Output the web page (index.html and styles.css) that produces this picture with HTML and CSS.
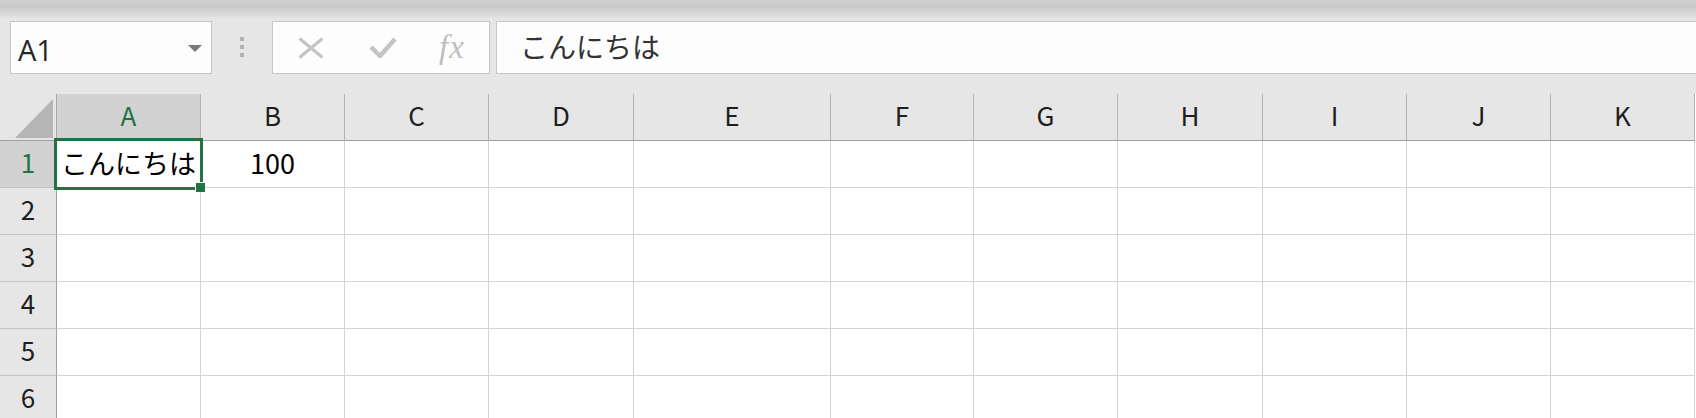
FILE: index.html
```html
<!DOCTYPE html>
<html lang="ja">
<head>
<meta charset="utf-8">
<title>Book1</title>
<link rel="stylesheet" href="styles.css">
</head>
<body>
<div class="toolbar">
  <div class="namebox">
    <span class="namebox-text">A1</span>
    <svg class="namebox-arrow" width="14" height="7" viewBox="0 0 14 7"><polygon points="0,0 14,0 7,7" fill="#7a7a7a"/></svg>
  </div>
  <div class="grip"><i></i><i></i><i></i></div>
  <div class="fx-tools">
    <svg class="tool-cancel" width="26" height="22" viewBox="0 0 26 22"><path d="M1.5 1.5 L24.5 20.5 M1.5 20.5 L24.5 1.5" stroke="#c4c4c4" stroke-width="3" fill="none"/></svg>
    <svg class="tool-enter" width="28" height="24" viewBox="0 0 28 24"><path d="M2 11 L11 20 L26 3" stroke="#c4c4c4" stroke-width="4.5" fill="none" stroke-linejoin="round"/></svg>
    <span class="tool-fx">fx</span>
  </div>
  <div class="formula">こんにちは</div>
</div>

<div class="sheet">
  <div class="corner"><span class="corner-tri"></span></div>
  <div class="colhead active">A</div>
  <div class="colhead">B</div>
  <div class="colhead">C</div>
  <div class="colhead">D</div>
  <div class="colhead">E</div>
  <div class="colhead">F</div>
  <div class="colhead">G</div>
  <div class="colhead">H</div>
  <div class="colhead">I</div>
  <div class="colhead">J</div>
  <div class="colhead">K</div>

  <div class="rowhead active">1</div>
  <div class="cell text">こんにちは</div>
  <div class="cell num">100</div>
  <div class="cell"></div><div class="cell"></div><div class="cell"></div><div class="cell"></div>
  <div class="cell"></div><div class="cell"></div><div class="cell"></div><div class="cell"></div><div class="cell"></div>

  <div class="rowhead">2</div>
  <div class="cell"></div><div class="cell"></div><div class="cell"></div><div class="cell"></div><div class="cell"></div><div class="cell"></div>
  <div class="cell"></div><div class="cell"></div><div class="cell"></div><div class="cell"></div><div class="cell"></div>

  <div class="rowhead">3</div>
  <div class="cell"></div><div class="cell"></div><div class="cell"></div><div class="cell"></div><div class="cell"></div><div class="cell"></div>
  <div class="cell"></div><div class="cell"></div><div class="cell"></div><div class="cell"></div><div class="cell"></div>

  <div class="rowhead">4</div>
  <div class="cell"></div><div class="cell"></div><div class="cell"></div><div class="cell"></div><div class="cell"></div><div class="cell"></div>
  <div class="cell"></div><div class="cell"></div><div class="cell"></div><div class="cell"></div><div class="cell"></div>

  <div class="rowhead">5</div>
  <div class="cell"></div><div class="cell"></div><div class="cell"></div><div class="cell"></div><div class="cell"></div><div class="cell"></div>
  <div class="cell"></div><div class="cell"></div><div class="cell"></div><div class="cell"></div><div class="cell"></div>

  <div class="rowhead">6</div>
  <div class="cell"></div><div class="cell"></div><div class="cell"></div><div class="cell"></div><div class="cell"></div><div class="cell"></div>
  <div class="cell"></div><div class="cell"></div><div class="cell"></div><div class="cell"></div><div class="cell"></div>

  <div class="selection"><span class="fill-handle"></span></div>
</div>
</body>
</html>
```

FILE: styles.css
```css
* { box-sizing: border-box; }

html, body {
  margin: 0;
  padding: 0;
  width: 1696px;
  height: 418px;
  overflow: hidden;
  background: #e6e6e6;
  font-family: "Noto Sans CJK JP", "Noto Sans", sans-serif;
}

/* formula bar strip */
.toolbar {
  display: flex;
  align-items: flex-start;
  height: 94px;
  padding: 21px 0 0 10px;
  background: linear-gradient(#d2d2d2 0, #c9c9c9 7px, #e6e6e6 19px, #e6e6e6 100%);
}

.namebox {
  display: flex;
  align-items: center;
  width: 202px;
  height: 53px;
  background: #fdfdfd;
  border: 1px solid #c6c6c6;
  padding: 0 9px 0 7px;
}
.namebox-text {
  flex: 1;
  font-family: "Open Sans", "Noto Sans", sans-serif;
  font-size: 29px;
  color: #262626;
  padding-top: 4px;
}
.namebox-arrow { margin-top: 1px; }

.grip {
  display: flex;
  flex-direction: column;
  gap: 4px;
  margin: 16px 28px 0 28px;
}
.grip i {
  display: block;
  width: 4px;
  height: 4px;
  background: #b3b3b3;
}

.fx-tools {
  display: flex;
  align-items: center;
  width: 218px;
  height: 53px;
  background: #fdfdfd;
  border: 1px solid #c6c6c6;
  padding-left: 25px;
}
.tool-cancel { margin-top: 1px; }
.tool-enter { margin-left: 45px; margin-top: 1px; }
.tool-fx {
  margin-left: 42px;
  font-family: "Liberation Serif", serif;
  font-style: italic;
  font-size: 33px;
  color: #bfbfbf;
  letter-spacing: 1px;
}

.formula {
  flex: 1;
  height: 53px;
  margin-left: 6px;
  margin-right: -4px;
  background: #fdfdfd;
  border: 1px solid #c6c6c6;
  padding-left: 23px;
  font-size: 28px;
  line-height: 49px;
  color: #333333;
}

/* worksheet grid */
.sheet {
  position: relative;
  display: grid;
  grid-template-columns: 57px 144px 144px 144px 145px 197px 143px 144px 145px 144px 144px 144px;
  grid-auto-rows: 47px;
  background: #ffffff;
}

.corner {
  position: relative;
  background: #e6e6e6;
  border-right: 1px solid #a9a9a9;
  border-bottom: 1px solid #9f9f9f;
}
.corner-tri {
  position: absolute;
  right: 3px;
  bottom: 2px;
  width: 38px;
  height: 39px;
  background: #b5b5b5;
  clip-path: polygon(100% 0, 100% 100%, 0 100%);
}

.colhead {
  display: flex;
  align-items: center;
  justify-content: center;
  padding-bottom: 5px;
  background: #e6e6e6;
  border-right: 1px solid #b4b4b4;
  border-bottom: 1px solid #9f9f9f;
  font-size: 26px;
  color: #1e1e1e;
}

.rowhead {
  display: flex;
  align-items: center;
  justify-content: center;
  padding-bottom: 5px;
  background: #e6e6e6;
  border-right: 1px solid #a0a0a0;
  border-bottom: 1px solid #c4c4c4;
  font-size: 26px;
  color: #1e1e1e;
}

.colhead.active,
.rowhead.active {
  background: #d2d2d2;
  color: #217346;
}

.cell {
  display: flex;
  align-items: center;
  padding-bottom: 4px;
  border-right: 1px solid #d4d4d4;
  border-bottom: 1px solid #d4d4d4;
  font-size: 27px;
  color: #000000;
  white-space: nowrap;
}
.cell.text { padding-left: 4px; }
.cell.num { justify-content: center; }

/* active cell outline */
.selection {
  position: absolute;
  left: 54px;
  top: 44px;
  width: 149px;
  height: 52px;
  border: 3px solid #217346;
}
.fill-handle {
  position: absolute;
  right: -5px;
  bottom: -5px;
  width: 10px;
  height: 10px;
  background: #217346;
  border-left: 1px solid #ffffff;
  border-top: 1px solid #ffffff;
}
```
